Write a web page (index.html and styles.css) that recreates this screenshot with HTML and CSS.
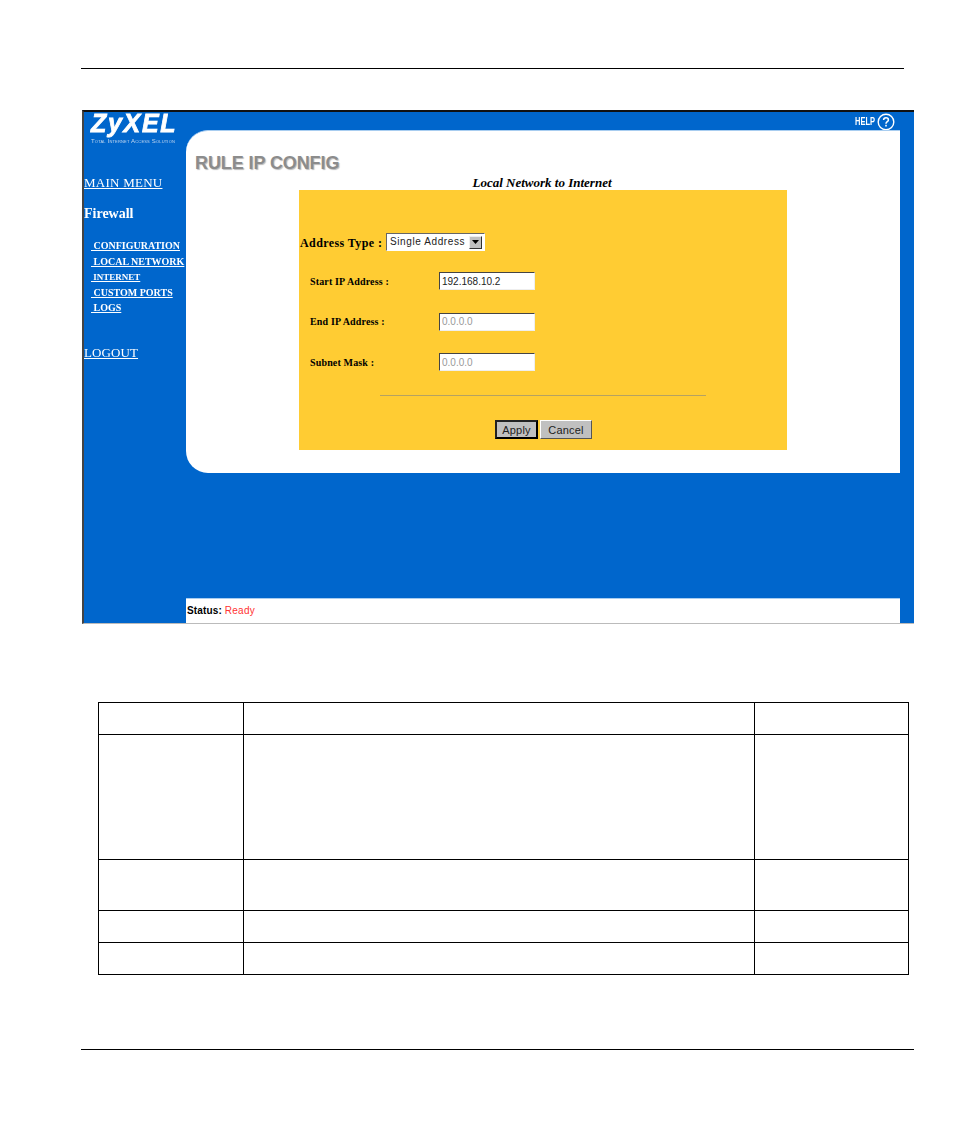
FILE: index.html
```html
<!DOCTYPE html>
<html lang="en">
<head>
<meta charset="utf-8">
<title>Rule IP Config</title>
<link rel="stylesheet" href="styles.css">
</head>
<body>
<div class="page">
  <div class="rule-top"></div>
  <div class="frame">
    <aside class="sidebar">
      <div class="logo">
        <div class="logo-name">ZyXEL</div>
        <div class="logo-tag">Total Internet Access Solution</div>
      </div>
      <a class="nav-main" href="#">MAIN MENU</a>
      <div class="nav-title">Firewall</div>
      <nav class="nav-sub">
        <a href="#">&nbsp;CONFIGURATION</a>
        <a href="#">&nbsp;LOCAL NETWORK</a>
        <a class="small" href="#">&nbsp;INTERNET</a>
        <a href="#">&nbsp;CUSTOM PORTS</a>
        <a href="#">&nbsp;LOGS</a>
      </nav>
      <a class="nav-logout" href="#">LOGOUT</a>
    </aside>
    <main class="main">
      <div class="topbar">
        <span class="help-text">HELP</span>
        <svg class="help-icon" width="18" height="18" viewBox="0 0 18 18" aria-hidden="true">
          <circle cx="9" cy="9" r="7.8" fill="none" stroke="#fff" stroke-width="1.4"/>
          <path d="M6.6 7.1C6.6 5.6 7.7 4.8 9 4.8c1.400 0 2.400.9 2.400 2.100 0 1.800-2.400 1.800-2.400 3.800" fill="none" stroke="#fff" stroke-width="1.500"/>
          <rect x="8.200" y="11.800" width="1.600" height="1.700" fill="#fff"/>
        </svg>
      </div>
      <section class="panel">
        <h1 class="heading">RULE IP CONFIG</h1>
        <div class="form-wrap">
          <div class="form-title">Local Network to Internet</div>
          <form class="form">
            <div class="type-row">
              <label class="type-label">Address Type :</label>
              <div class="select">
                <span class="select-text">Single Address</span>
                <span class="select-btn"><svg width="7" height="4" viewBox="0 0 7 4" aria-hidden="true"><path d="M0 0h7L3.500 4z" fill="#000"/></svg></span>
              </div>
            </div>
            <div class="ip-row">
              <label class="ip-label">Start IP Address :</label>
              <input class="ip-input" type="text" value="192.168.10.2">
            </div>
            <div class="ip-row">
              <label class="ip-label">End IP Address :</label>
              <input class="ip-input off" type="text" value="0.0.0.0">
            </div>
            <div class="ip-row">
              <label class="ip-label">Subnet Mask :</label>
              <input class="ip-input off" type="text" value="0.0.0.0">
            </div>
            <div class="divider"></div>
            <div class="buttons">
              <button class="btn default" type="button">Apply</button>
              <button class="btn wide" type="button">Cancel</button>
            </div>
          </form>
        </div>
      </section>
      <div class="status"><b>Status:</b> <span class="ready">Ready</span></div>
    </main>
  </div>
  <table class="grid">
    <colgroup><col class="c1"><col class="c2"><col class="c3"></colgroup>
    <tr class="r1"><td></td><td></td><td></td></tr>
    <tr class="r2"><td></td><td></td><td></td></tr>
    <tr class="r3"><td></td><td></td><td></td></tr>
    <tr class="r4"><td></td><td></td><td></td></tr>
    <tr class="r4"><td></td><td></td><td></td></tr>
  </table>
  <div class="rule-bottom"></div>
</div>
</body>
</html>
```
FILE: styles.css
```css
* { box-sizing: border-box; }
html, body { margin: 0; padding: 0; background: #fff; }
.page { width: 954px; height: 1132px; padding-top: 68px; font-family: "Liberation Serif", serif; }
.rule-top { width: 823px; height: 1px; margin-left: 81px; background: #000; }
.frame {
  display: flex; width: 832px; height: 514px; margin: 41px 0 0 82px;
  background: #0066cc; border-top: 2px solid #111; border-left: 2px solid #444; border-bottom: 1px solid #bbb;
  filter: blur(.3px);
}
.sidebar { width: 102px; flex: none; color: #fff; display: flex; flex-direction: column; align-items: flex-start; }
.sidebar a { color: #fff; }
.logo { margin: 0 0 0 7px; height: 62px; }
.logo-name { font: italic bold 25px/25px "Liberation Sans", sans-serif; letter-spacing: 1.7px; -webkit-text-stroke: .8px #fff; margin-top: -1px; }
.logo-tag { font: 6px/6px "Liberation Sans", sans-serif; font-variant: small-caps; letter-spacing: .18px; color: #c3d8f0; white-space: nowrap; margin-top: 2px; }
.nav-main { font-size: 13px; line-height: 15px; letter-spacing: .25px; margin-top: 1px; }
.nav-title { font-size: 14px; font-weight: bold; line-height: 15px; margin-top: 16px; }
.nav-sub { display: flex; flex-direction: column; align-items: flex-start; margin-top: 19px; font-size: 10px; font-weight: bold; line-height: 12px; gap: 3.500px; white-space: nowrap; }
.nav-sub a { display: block; margin-left: 7px; }
.nav-sub a.small { font-size: 9px; }
.nav-logout { font-size: 13px; line-height: 15px; letter-spacing: .1px; margin-top: 31px; }
.main { width: 714px; flex: none; display: flex; flex-direction: column; }
.topbar { height: 18px; display: flex; justify-content: flex-end; align-items: center; gap: 3px; padding-right: 5px; color: #fff; }
.help-text { font: bold 10px/10px "Liberation Sans", sans-serif; width: 19px; transform: scaleX(.75); transform-origin: left center; margin-top: 1px; white-space: nowrap; }
.help-icon { margin-top: 1px; }
.panel { height: 343px; background: #fff; border-radius: 22px 0 0 22px; border-top: 1px solid #a8cdf0; }
.heading { margin: 22px 0 0 9px; font: bold 18px/20px "Liberation Sans", sans-serif; color: #8c8c8c; text-shadow: 1px 1px 1px #bbb; letter-spacing: -.1px; }
.form-wrap { width: 488px; margin-left: 113px; }
.form-title { text-align: center; font: italic bold 13px/14px "Liberation Serif", serif; margin-top: 3px; padding-right: 2px; }
.form { background: #ffcc33; height: 260px; padding-top: 43px; }
.type-row { display: flex; align-items: center; height: 18px; }
.type-label { width: 87px; padding-left: 1px; font-size: 12px; font-weight: bold; letter-spacing: .4px; margin-top: 2px; white-space: nowrap; }
.select { width: 99px; height: 18px; display: flex; align-items: center; justify-content: space-between; background: #fff; border: 1px solid; border-color: #666 #fff #fff #666; padding: 0 2px 0 3px; }
.select-text { font: 10px/14px "Liberation Sans", sans-serif; letter-spacing: .6px; color: #222; white-space: nowrap; }
.select-btn { width: 13px; height: 13px; display: flex; align-items: center; justify-content: center; background: #c0c0c0; border: 1px solid; border-color: #eee #333 #333 #eee; }
.ip-row { display: flex; align-items: center; height: 18px; margin-top: 22.500px; }
.type-row + .ip-row { margin-top: 21px; }
.ip-label { width: 140px; padding-left: 11px; font-size: 10px; font-weight: bold; letter-spacing: .15px; white-space: nowrap; }
.ip-input { width: 96px; height: 18px; padding: 0 0 0 2px; font: 10px "Liberation Sans", sans-serif; color: #222; background: #fff; border: 1px solid; border-color: #444 #eee #eee #444; outline: none; }
.ip-input.off { color: #999; }
.divider { width: 326px; height: 1px; margin: 24px 0 0 81px; background: #b5a262; }
.buttons { display: flex; justify-content: flex-start; gap: 2px; margin: 24px 0 0 196px; }
.btn { width: 43px; height: 19px; padding: 0; font: 11px "Liberation Sans", sans-serif; letter-spacing: .2px; color: #222; background: #c0c0c0; border: 1px solid; border-color: #fff #555 #555 #fff; }
.btn.default { border: 2px solid; border-color: #222 #000 #000 #222; }
.btn.wide { width: 52px; }
.status { height: 25px; margin-top: 125px; padding: 5px 0 0 1px; background: #fff; border-top: 1px solid #a8cdf0; font: 10px/14px "Liberation Sans", sans-serif; }
.status b { letter-spacing: .15px; }
.ready { color: #ff3333; letter-spacing: .3px; }
.grid { border-collapse: collapse; table-layout: fixed; width: 810px; margin: 78px 0 0 98px; }
.c1 { width: 145px; } .c2 { width: 511px; } .c3 { width: 154px; }
.grid td { border: 1px solid #000; padding: 0; }
.r1 td { height: 32px; }
.r2 td { height: 125px; }
.r3 td { height: 51px; }
.r4 td { height: 32px; }
.rule-bottom { width: 833px; height: 1px; margin: 74px 0 0 81px; background: #000; }
```
